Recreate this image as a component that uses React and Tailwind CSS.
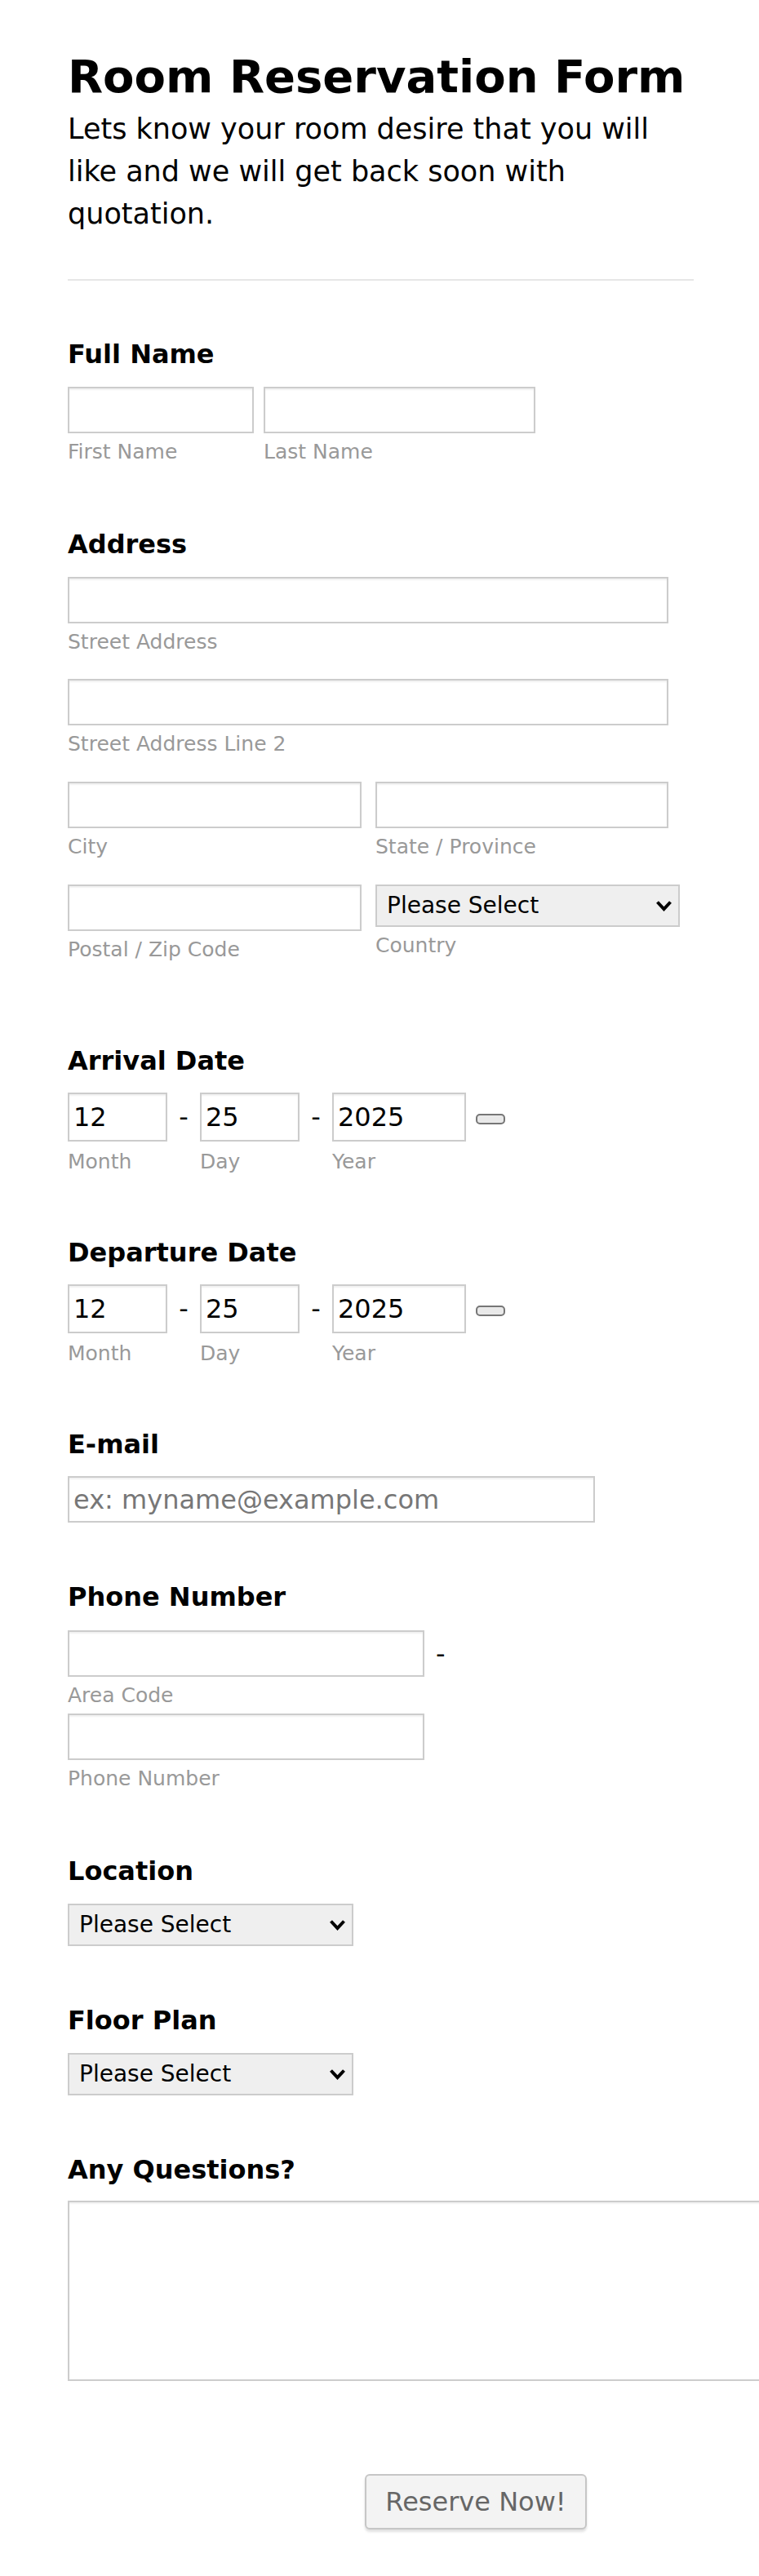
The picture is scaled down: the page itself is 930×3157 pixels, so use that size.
import React from "react";

// shared input look
const field =
  "block h-[57px] border-2 border-[#cccccc] bg-white px-[5px] text-[32px] text-black outline-none shadow-[inset_0_2px_2px_rgba(0,0,0,0.06)] placeholder:text-[#777777]";

function Label({ children }) {
  return <label className="block text-[32px] font-bold leading-[40px] text-black">{children}</label>;
}

function SubLabel({ children, className = "" }) {
  return <span className={`block text-[25px] leading-[30px] text-[#999999] ${className}`}>{children}</span>;
}

function Chevron() {
  return (
    <svg
      className="pointer-events-none absolute right-[9px] top-[19px]"
      width="21"
      height="14"
      viewBox="0 0 21 14"
      fill="none"
    >
      <path d="M2.5 2.5 L10.5 11 L18.5 2.5" stroke="#000" strokeWidth="4" strokeLinejoin="miter" />
    </svg>
  );
}

function Select({ className = "" }) {
  return (
    <div className={`relative h-[52px] ${className}`}>
      <select className="h-full w-full appearance-none border-2 border-[#cccccc] bg-[#efefef] pl-3 text-[28px] text-black outline-none">
        <option>Please Select</option>
      </select>
      <Chevron />
    </div>
  );
}

function DateField({ label, className = "" }) {
  return (
    <div className={className}>
      <Label>{label}</Label>
      <div className="mt-[19px] flex items-center">
        <input className={`${field} h-[60px] w-[122px]`} defaultValue="12" />
        <span className="w-[40px] text-center text-[32px] text-black">-</span>
        <input className={`${field} h-[60px] w-[122px]`} defaultValue="25" />
        <span className="w-[40px] text-center text-[32px] text-black">-</span>
        <input className={`${field} h-[60px] w-[164px]`} defaultValue="2025" />
        <button
          type="button"
          className="ml-3 mt-[5px] h-[13px] w-[36px] rounded-[5px] border-2 border-[#767676] bg-[#e9e9e9]"
        />
      </div>
      <div className="mt-[10px] flex">
        <SubLabel className="w-[162px]">Month</SubLabel>
        <SubLabel className="w-[162px]">Day</SubLabel>
        <SubLabel>Year</SubLabel>
      </div>
    </div>
  );
}

export default function App() {
  return (
    <div className="min-h-[3157px] w-full overflow-hidden bg-white pl-[83px] pt-[61px] font-['DejaVu_Sans',sans-serif] text-black">
      <h1 className="text-[56px] font-bold leading-[65px]">Room Reservation Form</h1>
      <p className="mt-[6px] w-[767px] text-[35px] leading-[52px]">
        Lets know your room desire that you will like and we will get back soon with quotation.
      </p>
      <div className="mt-[54px] h-[2px] w-[767px] bg-[#e6e6e6]" />

      {/* full name */}
      <div className="mt-[70px]">
        <Label>Full Name</Label>
        <div className="mt-5 flex gap-3">
          <div>
            <input className={`${field} w-[228px]`} />
            <SubLabel className="mt-2">First Name</SubLabel>
          </div>
          <div>
            <input className={`${field} w-[333px]`} />
            <SubLabel className="mt-2">Last Name</SubLabel>
          </div>
        </div>
      </div>

      {/* address */}
      <div className="mt-[78px]">
        <Label>Address</Label>
        <input className={`${field} mt-5 w-[736px]`} />
        <SubLabel className="mt-2">Street Address</SubLabel>
        <input className={`${field} mt-[30px] w-[736px]`} />
        <SubLabel className="mt-2">Street Address Line 2</SubLabel>
        <div className="mt-[31px] flex gap-[17px]">
          <div className="w-[360px]">
            <input className={`${field} w-[360px]`} />
            <SubLabel className="mt-2">City</SubLabel>
          </div>
          <div className="w-[359px]">
            <input className={`${field} w-[359px]`} />
            <SubLabel className="mt-2">State / Province</SubLabel>
          </div>
        </div>
        <div className="mt-[31px] flex gap-[17px]">
          <div className="w-[360px]">
            <input className={`${field} w-[360px]`} />
            <SubLabel className="mt-2">Postal / Zip Code</SubLabel>
          </div>
          <div className="w-[373px]">
            <Select className="w-[373px]" />
            <SubLabel className="mt-2">Country</SubLabel>
          </div>
        </div>
      </div>

      <DateField label="Arrival Date" className="mt-[101px]" />
      <DateField label="Departure Date" className="mt-[76px]" />

      {/* email */}
      <div className="mt-[76px]">
        <Label>E-mail</Label>
        <input className={`${field} mt-[19px] w-[646px]`} placeholder="ex: myname@example.com" />
      </div>

      {/* phone */}
      <div className="mt-[71px]">
        <Label>Phone Number</Label>
        <div className="mt-[21px] flex items-center">
          <input className={`${field} w-[437px]`} />
          <span className="ml-[14px] text-[32px] text-black">-</span>
        </div>
        <SubLabel className="mt-2">Area Code</SubLabel>
        <input className={`${field} mt-[7px] w-[437px]`} />
        <SubLabel className="mt-2">Phone Number</SubLabel>
      </div>

      <div className="mt-[78px]">
        <Label>Location</Label>
        <Select className="mt-5 w-[350px]" />
      </div>

      <div className="mt-[71px]">
        <Label>Floor Plan</Label>
        <Select className="mt-5 w-[350px]" />
      </div>

      <div className="mt-[71px]">
        <Label>Any Questions?</Label>
        <textarea className="mt-[18px] block h-[221px] w-[900px] resize-none border-2 border-[#cccccc] bg-white p-[5px] text-[32px] outline-none shadow-[inset_0_2px_2px_rgba(0,0,0,0.06)]" />
      </div>

      <div className="pb-[57px] pt-[114px]">
        <button
          type="button"
          className="ml-[364px] h-[68px] w-[272px] rounded-[6px] border-2 border-[#c6c6c6] bg-[#f3f3f3] text-[32px] text-[#666666] shadow-[0_3px_3px_rgba(0,0,0,0.12)]"
        >
          Reserve Now!
        </button>
      </div>
    </div>
  );
}
